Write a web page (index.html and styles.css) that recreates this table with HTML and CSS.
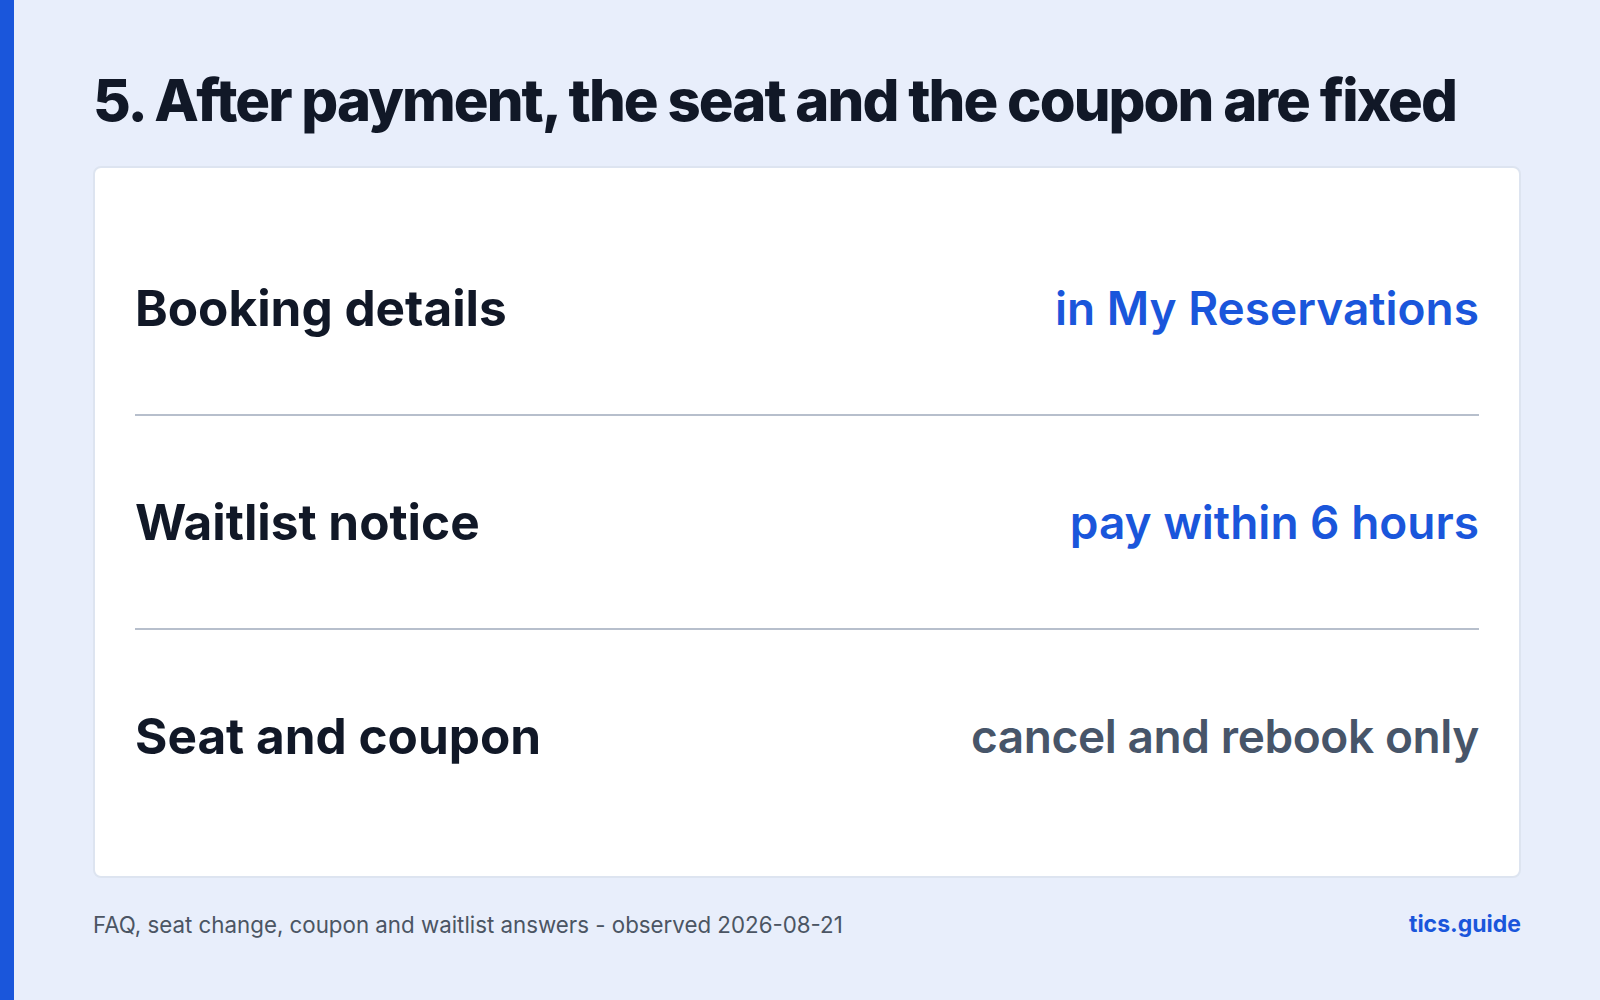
FILE: index.html
```html
<!DOCTYPE html>
<html lang="en">
<head>
  <meta charset="UTF-8">
  <title>After payment</title>
  <link rel="stylesheet" href="styles.css">
</head>
<body>
  <div class="accent"></div>
  <main class="slide">
    <h1 class="slide-title">5. After payment, the seat and the coupon are fixed</h1>
    <div class="card">
      <div class="row">
        <span class="row-label">Booking details</span>
        <span class="row-value blue">in My Reservations</span>
      </div>
      <div class="row">
        <span class="row-label">Waitlist notice</span>
        <span class="row-value blue">pay within 6 hours</span>
      </div>
      <div class="row">
        <span class="row-label">Seat and coupon</span>
        <span class="row-value muted">cancel and rebook only</span>
      </div>
    </div>
    <footer class="slide-footer">
      <span class="source">FAQ, seat change, coupon and waitlist answers - observed 2026-08-21</span>
      <span class="brand">tics.guide</span>
    </footer>
  </main>
</body>
</html>
```

FILE: styles.css
```css
html, body {
  margin: 0;
  height: 100%;
}
body {
  background: #e8eefb;
  color: #111827;
  font-family: Inter, 'Noto Sans', sans-serif;
  display: flex;
  overflow: hidden;
}
.accent {
  width: 14px;
  flex: none;
  background: #1a56db;
}
.slide {
  flex: 1;
  padding: 0 79px;
  display: flex;
  flex-direction: column;
}
.slide-title {
  margin: 64px 0 0 0;
  font-size: 58px;
  font-weight: 800;
  letter-spacing: -1.95px;
  line-height: 72px;
  white-space: nowrap;
  color: #111827;
}
.card {
  margin-top: 30px;
  background: #fff;
  border: 2px solid #dde4f0;
  border-radius: 8px;
  padding: 34px 40px 34px 40px;
  display: flex;
  flex-direction: column;
}
.row {
  height: 212px;
  display: flex;
  align-items: center;
  justify-content: space-between;
  border-bottom: 2px solid #b7bfcc;
}
.row:last-child {
  border-bottom: none;
}
.row-label {
  font-size: 49.5px;
  font-weight: 700;
  color: #111827;
}
.row-value {
  font-size: 46px;
  font-weight: 600;
}
.row-value.blue {
  color: #1a56db;
}
.row-value.muted {
  color: #475569;
  letter-spacing: -0.4px;
}
.slide-footer {
  margin-top: 32px;
  display: flex;
  justify-content: space-between;
  align-items: center;
  font-size: 22.3px;
}
.source {
  color: #4b5563;
}
.brand {
  color: #1a56db;
  font-size: 23px;
  font-weight: 700;
}
```
